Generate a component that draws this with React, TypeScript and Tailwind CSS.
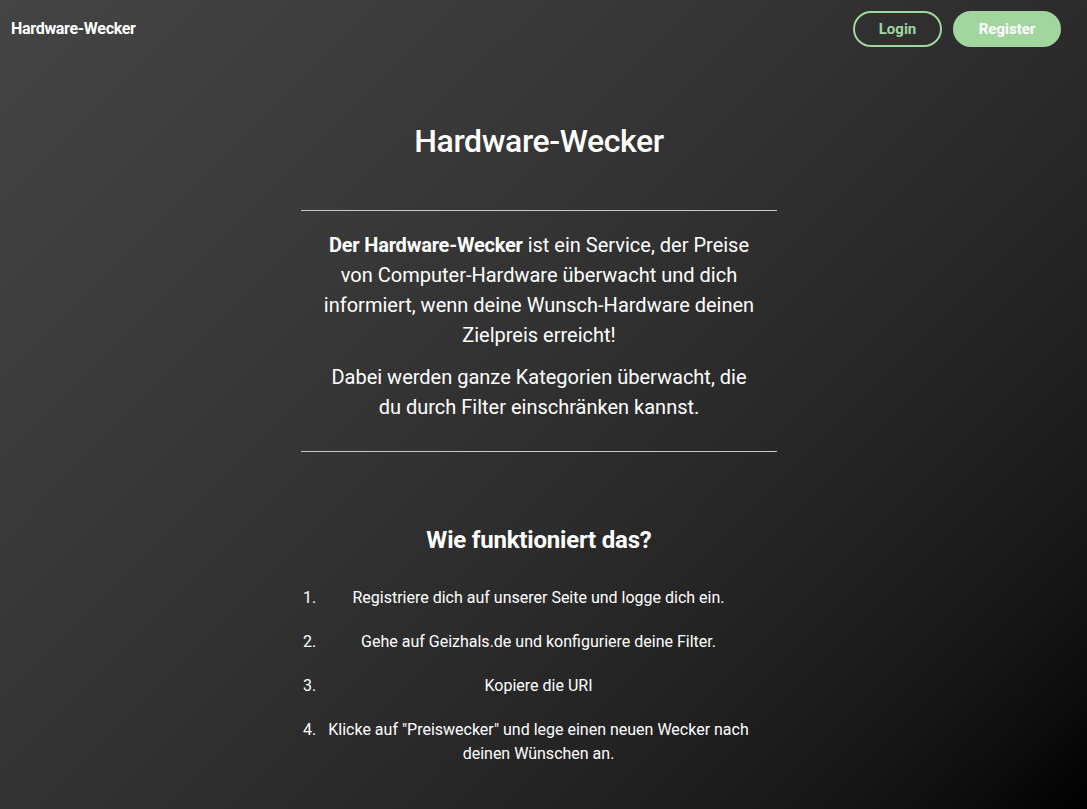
import React from "react";

const steps = [
  "Registriere dich auf unserer Seite und logge dich ein.",
  "Gehe auf Geizhals.de und konfiguriere deine Filter.",
  "Kopiere die URI",
  'Klicke auf "Preiswecker" und lege einen neuen Wecker nach deinen Wünschen an.',
];

export default function App() {
  return (
    <div
      className="min-h-[809px] w-full bg-[linear-gradient(135deg_in_srgb-linear,#444444,#000000)] text-white"
      style={{ fontFamily: "Roboto, 'Noto Sans', sans-serif" }}
    >
      {/* Top bar */}
      <nav className="flex h-[57px] items-center justify-between pl-[11px] pr-[26px]">
        <div className="text-[16px] font-bold tracking-[-0.3px]">Hardware-Wecker</div>
        <div className="flex items-center gap-[11px]">
          <button className="h-[36px] w-[89px] rounded-full border-2 border-[#a2d69f] pt-[1px] text-[15px] font-bold text-[#a2d69f]">
            Login
          </button>
          <button className="h-[36px] w-[108px] rounded-full bg-[#a2d69f] pt-[1px] text-[15px] font-bold text-white">
            Register
          </button>
        </div>
      </nav>

      <main className="flex justify-center pr-[9px]">
        <div className="w-[476px] pb-[40px]">
          <h1 className="mt-[62px] text-center text-[32px] font-medium leading-[44px] tracking-[-0.4px]">
            Hardware-Wecker
          </h1>

          <hr className="mt-[47px] border-t border-[#c8c8c8]" />

          <div className="px-[22px] pt-[19px] text-center text-[20px] leading-[30px]">
            <p>
              <span className="font-bold tracking-[-0.2px]">Der Hardware-Wecker</span> ist ein Service, der Preise von
              Computer-Hardware überwacht und dich informiert, wenn deine Wunsch-Hardware deinen
              Zielpreis erreicht!
            </p>
            <p className="mt-[12px]">
              Dabei werden ganze Kategorien überwacht, die du durch Filter einschränken kannst.
            </p>
          </div>

          <hr className="mt-[29px] border-t border-[#c8c8c8]" />

          <h2 className="mt-[72px] text-center text-[24px] font-bold leading-[32px] tracking-[-0.2px]">
            Wie funktioniert das?
          </h2>

          <ol className="mt-[30px] flex flex-col gap-[20px] text-[16px] leading-[24px]">
            {steps.map((s, i) => (
              <li key={i} className="flex">
                <span className="w-[25px] shrink-0 pl-[2px]">{i + 1}.</span>
                <span className="flex-1 pr-[26px] text-center">{s}</span>
              </li>
            ))}
          </ol>
        </div>
      </main>
    </div>
  );
}
